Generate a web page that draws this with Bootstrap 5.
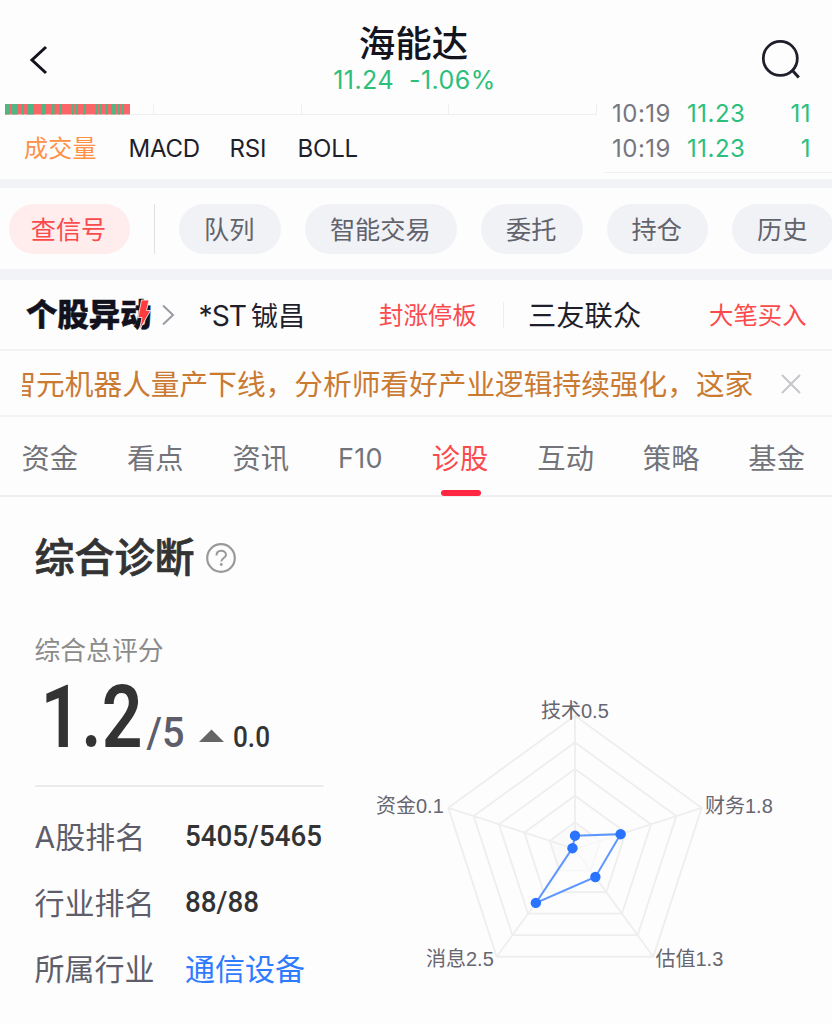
<!DOCTYPE html>
<html lang="zh-CN">
<head>
<meta charset="utf-8">
<meta name="viewport" content="width=device-width, initial-scale=1">
<title>海能达 诊股</title>
<link href="https://cdn.jsdelivr.net/npm/bootstrap@5.3.0/dist/css/bootstrap.min.css" rel="stylesheet">
<style>
  body { font-family: Inter, "Noto Sans CJK SC", sans-serif; background: #fdfdfe; color: #1f1f2c; width: 832px; height: 1024px; overflow: hidden; line-height: 1; }
  svg { display: block; }
  .green { color: #2cbf7b; }
  .red { color: #fb4a4c; }
  .topbar { height: 104px; padding: 0 32px 0 29px; }
  .topbar .side { width: 46px; }
  .stock-name { font-size: 36.5px; font-weight: 500; line-height: 40px; padding-top: 24px; margin-left: -2px; color: #14141f; }
  .stock-quote { font-size: 25px; line-height: 30px; margin-top: 1px; white-space: pre; letter-spacing: .45px; }
  .chart-zone { height: 75px; }
  .chart-left { width: 604px; }
  .indicators { font-size: 24px; height: 30px; margin-top: 18px; line-height: 30px; padding-left: 24px; white-space: nowrap; letter-spacing: -.2px; }
  .indicators .active { color: #ff9147; letter-spacing: .3px; }
  .ticks { width: 228px; font-size: 24px; padding: 0 21px 0 8px; border-bottom: 1px solid #f1f1f3; height: 69px; letter-spacing: .5px; }
  .ticks .tick { height: 35px; line-height: 35px; position: relative; top: -8px; }
  .ticks .time { width: 75px; color: #76767f; }
  .band { background: #f1f3f7; }
  .pills { height: 81px; padding: 16px 0 15px 9px; }
  .pill { height: 50px; border-radius: 25px; background: #f1f2f6; color: #62636c; font-size: 25.2px; line-height: 53px; flex: none; width: 101.5px; text-align: center; text-indent: -1px; margin-right: 24px; white-space: nowrap; }
  .pill.hot { width: 121px; background: #ffeced; color: #fb4a4c; text-indent: -2px; }
  .sep { width: 1px; background: #dfe0e4; flex: none; }
  .movers { height: 71px; border-bottom: 2px solid #f3f3f5; padding-left: 26px; font-size: 28.3px; white-space: nowrap; }
  .movers .name { padding-top: 3px; }
  .logo { width: 128px; font-size: 31.3px; font-weight: 900; color: #11121d; line-height: 42px; letter-spacing: .1px; -webkit-text-stroke: .5px #11121d; }
  .logo svg { position: absolute; left: 110px; top: 5px; }
  .movers .tag { font-size: 24.4px; padding: 2px 0 0; }
  .notice { height: 66px; border-bottom: 2px solid #f3f3f5; padding: 2px 31px 0 22px; color: #ca7a31; font-size: 28.7px; }
  .notice .clip { width: 731px; overflow: hidden; white-space: nowrap; line-height: 48px; padding-top: 2px; }
  .notice .clip span { margin-left: -14.6px; }
  .tabs { height: 80px; border-bottom: 2px solid #f0f0f2; padding: 0 27px 0 21.5px; font-size: 28.3px; line-height: 84px; color: #73747a; }
  .tabs .on { color: #fb4a4c; }
  .tabs .on::after { content: ""; position: absolute; left: 9px; top: 73px; width: 40px; height: 6px; border-radius: 3px; background: #ff2741; }
  .diag { padding-left: 34.5px; }
  .diag h1 { font-size: 40px; font-weight: 500; -webkit-text-stroke: .7px #333; line-height: 50px; color: #333; margin: 0; }
  .score-col { width: 290px; }
  .sub { font-size: 25.8px; line-height: 30px; color: #8b8b8b; }
  .rank { height: 66px; font-size: 30px; color: #5e5e6a; line-height: 67px; white-space: nowrap; }
  .rank .k { width: 150.5px; }
  .din { font-family: Roboto, sans-serif; }
</style>
</head>
<body>
<header class="topbar d-flex justify-content-between">
  <div class="side"><svg width="20" height="32" viewBox="0 0 20 32" style="margin-top:44px"><path d="M17 3 3 16l14 13" fill="none" stroke="#14141f" stroke-width="3"/></svg></div>
  <div class="text-center">
    <div class="stock-name">海能达</div>
    <div class="stock-quote green">11.24  -1.06%</div>
  </div>
  <div class="side"><svg width="42" height="42" viewBox="0 0 42 42" style="margin:39px 0 0 6px"><circle cx="20.300" cy="19.400" r="17" fill="none" stroke="#1f1f2c" stroke-width="2.800"/><path d="M32 31l6.800 7.500" stroke="#1f1f2c" stroke-width="3"/></svg></div>
</header>

<section class="chart-zone d-flex">
  <div class="chart-left">
    <svg width="604" height="12" viewBox="0 0 604 12">
      <path d="M130 10.500H597M153.500 0V10M301.500 0V10M448.500 0V10M596.500 0V10" stroke="#efeff1" fill="none"/>
      <rect x="5" y="0" width="125" height="10.500" fill="#fb6567"/>
      <path id="up" fill="#4fb583"/>
    </svg>
    <div class="indicators d-flex">
      <span class="active" style="width:104.500px">成交量</span><span style="width:101px">MACD</span><span style="width:68px">RSI</span><span>BOLL</span>
    </div>
  </div>
  <div class="ticks">
    <div class="d-flex tick"><span class="time">10:19</span><span class="green">11.23</span><span class="green ms-auto">11</span></div>
    <div class="d-flex tick"><span class="time">10:19</span><span class="green">11.23</span><span class="green ms-auto">1</span></div>
  </div>
</section>

<div class="band" style="height:9px"></div>
<nav class="pills d-flex overflow-hidden">
  <span class="pill hot">查信号</span><span class="sep me-4"></span>
  <span class="pill">队列</span><span class="pill" style="width:152.500px">智能交易</span><span class="pill">委托</span><span class="pill">持仓</span><span class="pill">历史</span>
</nav>
<div class="band" style="height:11px"></div>

<section class="movers d-flex align-items-center">
  <div class="logo position-relative">个股异动
    <svg width="16" height="32" viewBox="0 0 16 32"><path d="M5.500 1H13l-2.500 10.500h4L3.500 31l2.500-12.500H2z" fill="#ff3b40" stroke="#fdfdfe" stroke-width=".8"/></svg>
  </div>
  <svg width="14" height="22" viewBox="0 0 14 22" style="margin-left:7px"><path d="M2 1.500 12 11 2 20.500" fill="none" stroke="#9a9ba2" stroke-width="2"/></svg>
  <span class="name" style="width:180.500px;margin-left:23.500px"><span style="letter-spacing:-1px">*ST</span><span style="margin-left:5px;font-size:27px">铖昌</span></span>
  <span class="tag red" style="width:124px">封涨停板</span>
  <span class="sep" style="height:26px;opacity:.5"></span>
  <span class="name" style="width:181px;margin-left:24px">三友联众</span>
  <span class="tag red">大笔买入</span>
</section>

<section class="notice d-flex align-items-center justify-content-between">
  <div class="clip"><span>智元机器人量产下线，分析师看好产业逻辑持续强化，这家</span></div>
  <svg width="20" height="20" viewBox="0 0 20 20"><path d="M1 1l18 18M19 1 1 19" stroke="#c5c6ca" stroke-width="2"/></svg>
</section>

<nav class="tabs d-flex justify-content-between">
  <span>资金</span><span>看点</span><span>资讯</span><span style="font-size:27px;letter-spacing:.3px">F10</span><span class="on position-relative">诊股</span><span>互动</span><span>策略</span><span>基金</span>
</nav>

<main class="diag">
  <div class="d-flex align-items-center" style="padding-top:36px">
    <h1>综合诊断</h1>
    <svg style="margin-left:6.500px" width="40" height="32" viewBox="-5 0 40 32"><circle cx="15" cy="16" r="13.800" fill="none" stroke="#999" stroke-width="2.200"/><path d="M10.500 13.500c0-6.500 9.500-6 9.500-.8 0 3.300-4.700 3.300-4.700 6.800" fill="none" stroke="#999" stroke-width="2"/><circle cx="15.300" cy="22.500" r="1.400" fill="#999"/></svg>
  </div>
  <div class="d-flex">
    <div class="score-col">
      <div class="sub" style="margin-top:53px">综合总评分</div>
      <svg class="din" width="290" height="122" viewBox="34.500 666 290 122">
        <text x="40" y="747" font-size="88" font-weight="600" fill="#333" textLength="102" lengthAdjust="spacingAndGlyphs">1.2</text>
        <text x="146" y="747" font-size="43" font-weight="500" fill="#5d5d6b" textLength="38" lengthAdjust="spacingAndGlyphs">/5</text>
        <path d="M198.500 742 211 729.500 223.500 742z" fill="#666"/>
        <text x="232.500" y="747" font-size="29.500" font-weight="500" fill="#333" textLength="37" lengthAdjust="spacingAndGlyphs">0.0</text>
        <path d="M34.500 786H323" stroke="#ebebed" stroke-width="2"/>
      </svg>
      <div style="padding-top:16px">
        <div class="rank d-flex"><span class="k">A股排名</span><svg class="din" width="139" height="66"><text x="0" y="42" font-size="30" font-weight="500" fill="#333" textLength="137" lengthAdjust="spacingAndGlyphs">5405/5465</text></svg></div>
        <div class="rank d-flex"><span class="k">行业排名</span><svg class="din" width="139" height="66"><text x="0" y="42" font-size="30" font-weight="500" fill="#333" textLength="74" lengthAdjust="spacingAndGlyphs">88/88</text></svg></div>
        <div class="rank d-flex"><span class="k">所属行业</span><span style="color:#2f7bff">通信设备</span></div>
      </div>
    </div>
    <svg width="440" height="310" viewBox="0 0 440 310" style="margin:97px 0 0 35.500px">
      <g id="radar" transform="translate(215 169)"></g>
      <g font-family="'Liberation Sans','Noto Sans CJK SC',sans-serif" font-size="20" fill="#666670">
        <text x="181" y="37.500">技术0.5</text><text x="345" y="133">财务1.8</text><text x="16" y="133">资金0.1</text><text x="66" y="285.500">消息2.5</text><text x="295.500" y="285.500">估值1.3</text>
      </g>
    </svg>
  </div>
</main>

<script src="https://cdn.jsdelivr.net/npm/bootstrap@5.3.0/dist/js/bootstrap.bundle.min.js"></script>
<script>
  // Rising-volume bars: [start, width]
  const up = [[5,4.500],[12,6],[22,1.500],[27,7],[41,4],[51,2.500],[54.500,1],[59,2.500],[72,1.500],[76,2],[79,1],[83,2.500],[95,2],[100,1],[105.500,2],[111,2],[114,1.500],[118,2],[122,1.500]];
  document.getElementById('up').setAttribute('d', up.map(([x, w]) => `M${x} 0h${w}v10.500h-${w}z`).join(''));

  // Five-axis radar, scores out of 5
  const scores = [0.5, 1.8, 1.3, 2.5, 0.1], unit = 133.200 / 5;
  const pt = (i, v) => { const a = -Math.PI / 2 + i * Math.PI * 2 / 5; return [v * unit * Math.cos(a), v * unit * Math.sin(a)].map(n => n.toFixed(2)); };
  let out = '';
  for (let level = 5; level >= 1; level--)
    out += `<polygon points="${scores.map((_, i) => pt(i, level)).join(' ')}" fill="${level === 1 ? '#fafafb' : 'none'}" stroke="#eeeeef" stroke-width="1.800"/>`;
  scores.forEach((_, i) => out += `<path d="M0 0L${pt(i, 5)}" stroke="#eeeeef" stroke-width="1.800"/>`);
  out += `<polygon points="${scores.map((v, i) => pt(i, v)).join(' ')}" fill="#fdfdfe" fill-opacity=".6" stroke="#5e96ff" stroke-width="2"/>`;
  scores.forEach((v, i) => { const [x, y] = pt(i, v); out += `<circle cx="${x}" cy="${y}" r="5.200" fill="#2a73ff"/>`; });
  document.getElementById('radar').innerHTML = out;
</script>
</body>
</html>
